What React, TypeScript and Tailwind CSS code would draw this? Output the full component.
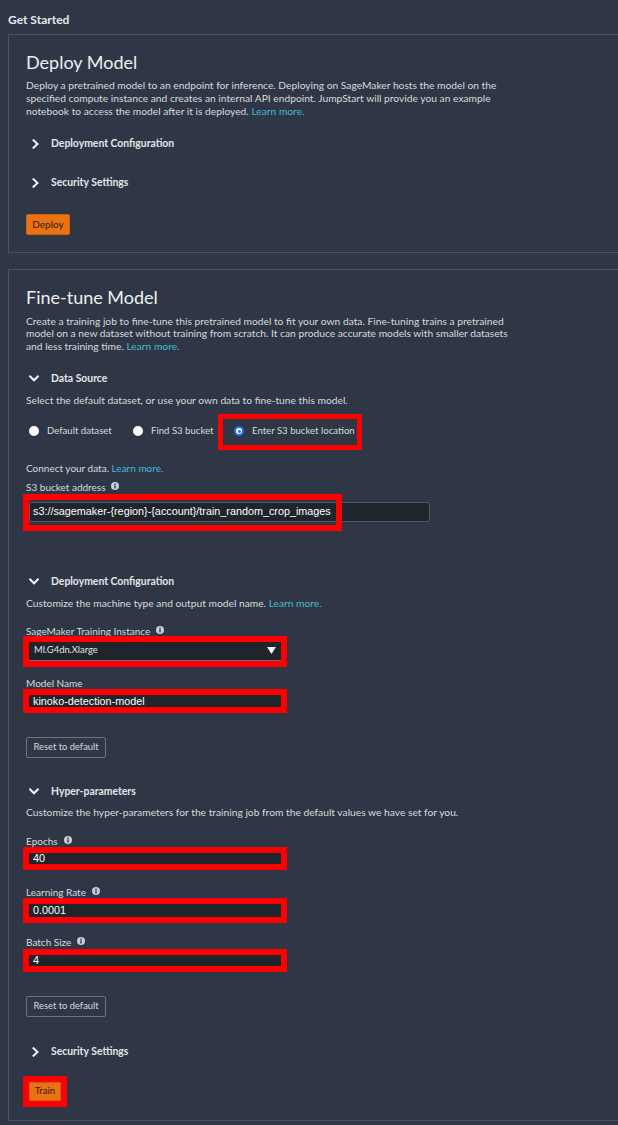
import React from "react";

const F = { fontFamily: "Lato, 'Open Sans', sans-serif" } as React.CSSProperties;
const ARIAL = { fontFamily: "'Liberation Sans', Arial, sans-serif" } as React.CSSProperties;

function ChevronRight() {
  return (
    <svg width="7" height="10" viewBox="0 0 7 10" className="block">
      <path d="M1.5 1.2 L5.5 5 L1.5 8.8" fill="none" stroke="#f2f3f3" strokeWidth="2" strokeLinecap="square" />
    </svg>
  );
}
function ChevronDown() {
  return (
    <svg width="10" height="7" viewBox="0 0 10 7" className="block">
      <path d="M1.2 1.5 L5 5.3 L8.8 1.5" fill="none" stroke="#f2f3f3" strokeWidth="2" strokeLinecap="square" />
    </svg>
  );
}
function Info() {
  return (
    <svg width="8" height="8" viewBox="0 0 8 8" className="block">
      <circle cx="4" cy="4" r="4" fill="#c9ced4" />
      <rect x="3.3" y="3.3" width="1.4" height="3.2" fill="#2f3746" />
      <rect x="3.3" y="1.5" width="1.4" height="1.3" fill="#2f3746" />
    </svg>
  );
}

function Section({ open, title }: { open?: boolean; title: string }) {
  return (
    <div className="relative top-[1px] flex items-center h-[20px]">
      <div className={open ? "w-[25px] pl-[3px]" : "w-[25px] pl-[6px]"}>
        {open ? <ChevronDown /> : <ChevronRight />}
      </div>
      <span className="text-[10.4px] font-bold text-[#e3e6e9]">{title}</span>
    </div>
  );
}

function Label({ children, info }: { children: React.ReactNode; info?: boolean }) {
  return (
    <div className="flex items-center h-[13px] leading-[13px] text-[10px] text-[#d5dbdb]">
      <span>{children}</span>
      {info && <span className="ml-[6px] -mt-[3px]"><Info /></span>}
    </div>
  );
}

function RedInput({ value, h }: { value: string; h: string }) {
  return (
    <div className={`relative z-10 w-[264px] ${h} border-[6px] border-[#ff0000] bg-[#1f242d] flex items-center overflow-visible`}>
      <span className="pl-[4px] text-[10.8px] leading-[12px] text-white whitespace-nowrap" style={ARIAL}>
        {value}
      </span>
    </div>
  );
}

function Radio({ checked }: { checked?: boolean }) {
  if (checked)
    return (
      <span className="w-[10px] h-[10px] rounded-full bg-[#1a73e8] flex items-center justify-center shrink-0">
        <span className="w-[6px] h-[6px] rounded-full bg-white flex items-center justify-center">
          <span className="w-[3px] h-[3px] rounded-full bg-[#1a73e8]" />
        </span>
      </span>
    );
  return <span className="w-[10px] h-[10px] rounded-full bg-white shrink-0" />;
}

export default function App() {
  return (
    <div className="w-[618px] min-h-[1125px] bg-[#2f3746] overflow-hidden pb-[5px]" style={F}>
      <div className="pl-[8px] pt-[12px] h-[34px] text-[12px] leading-[16px] font-bold text-[#e6e9ec]">Get Started</div>

      {/* Deploy card */}
      <div className="ml-[8px] w-[620px] h-[219px] border border-[#4b5362] pl-[17px] pt-[15px]">
        <div className="text-[18px] leading-[24px] text-[#eceef0]">Deploy Model</div>
        <div className="mt-[4.5px] text-[10.25px] leading-[13px] text-[#d5dbdb] whitespace-nowrap">
          <div>Deploy a pretrained model to an endpoint for inference. Deploying on SageMaker hosts the model on the</div>
          <div>specified compute instance and creates an internal API endpoint. JumpStart will provide you an example</div>
          <div>
            notebook to access the model after it is deployed. <span className="text-[#44b9d6]">Learn more.</span>
          </div>
        </div>
        <div className="mt-[6px] h-[39px] flex items-center"><Section title="Deployment Configuration" /></div>
        <div className="h-[39px] flex items-center"><Section title="Security Settings" /></div>
        <button className="mt-[12.5px] w-[44px] h-[21px] rounded-[2px] bg-[#ec7211] border border-[#c9600e] text-[10px] text-[#2a1d10]">
          Deploy
        </button>
      </div>

      {/* Fine-tune card */}
      <div className="ml-[8px] mt-[16px] w-[620px] h-[852px] border border-[#4b5362] pl-[17px] pt-[15px]">
        <div className="text-[18px] leading-[24px] text-[#eceef0]">Fine-tune Model</div>
        <div className="mt-[5.5px] text-[10.25px] leading-[12.5px] text-[#d5dbdb] whitespace-nowrap">
          <div>Create a training job to fine-tune this pretrained model to fit your own data. Fine-tuning trains a pretrained</div>
          <div>model on a new dataset without training from scratch. It can produce accurate models with smaller datasets</div>
          <div>
            and less training time. <span className="text-[#44b9d6]">Learn more.</span>
          </div>
        </div>
        <div className="mt-[15.5px]"><Section open title="Data Source" /></div>
        <div className="mt-[6.5px] text-[10.25px] leading-[13px] text-[#d5dbdb]">
          Select the default dataset, or use your own data to fine-tune this model.
        </div>

        <div className="mt-[14.5px] h-[20px] flex items-center text-[9.6px] text-[#d5dbdb] pl-[3px]">
          <div className="w-[104px] flex items-center gap-[8px]"><Radio /><span>Default dataset</span></div>
          <div className="w-[101px] flex items-center gap-[8px]"><Radio /><span>Find S3 bucket</span></div>
          <div className="relative flex items-center gap-[8px]">
            <Radio checked /><span>Enter S3 bucket location</span>
            <div className="absolute left-[-16px] top-[-10px] w-[144px] h-[36px] border-[5px] border-[#ff0000]" />
          </div>
        </div>

        <div className="mt-[20.5px] text-[10px] leading-[13px] text-[#d5dbdb]">
          Connect your data. <span className="text-[#44b9d6]">Learn more.</span>
        </div>
        <div className="mt-[6px]"><Label info>S3 bucket address</Label></div>
        <div className="relative mt-[7.5px] ml-[3px] w-[401px] h-[20px] bg-[#1f242d] border border-[#525a68] rounded-[2px] flex items-center">
          <span className="pl-[3px] text-[10.8px] text-white whitespace-nowrap" style={ARIAL}>
            s3://sagemaker-{"{region}"}-{"{account}"}/train_random_crop_images
          </span>
          <div className="absolute left-[-7px] top-[-9px] w-[319px] h-[37px] border-[6px] border-[#ff0000]" />
        </div>

        <div className="mt-[49px]"><Section open title="Deployment Configuration" /></div>
        <div className="mt-[6.5px] text-[10.25px] leading-[13px] text-[#d5dbdb]">
          Customize the machine type and output model name. <span className="text-[#44b9d6]">Learn more.</span>
        </div>
        <div className="mt-[15px]"><Label info>SageMaker Training Instance</Label></div>
        <div className="relative z-10 -mt-[2.5px] -ml-[3px] w-[264px] h-[31px] border-[6px] border-[#ff0000] bg-[#ff0000]">
          <div className="h-[19px] bg-[#1f242d] border-b border-[#6b7280] flex items-center justify-between pl-[5px] pr-[5px]">
            <span className="text-[9.4px] text-[#e3e6e9]">Ml.G4dn.Xlarge</span>
            <svg width="9" height="7" viewBox="0 0 9 7"><path d="M0 0 H9 L4.5 7 Z" fill="#f2f3f3" /></svg>
          </div>
        </div>
        <div className="mt-[10.5px]"><Label>Model Name</Label></div>
        <div className="-mt-[1.5px] -ml-[3px]"><RedInput value="kinoko-detection-model" h="h-[24px]" /></div>

        <button className="mt-[24px] w-[80px] h-[21px] rounded-[2px] border border-[#6c7480] text-[9.4px] text-[#d5dbdb]">
          Reset to default
        </button>

        <div className="mt-[23px]"><Section open title="Hyper-parameters" /></div>
        <div className="mt-[5.5px] text-[10.25px] leading-[13px] text-[#d5dbdb]">
          Customize the hyper-parameters for the training job from the default values we have set for you.
        </div>
        <div className="mt-[16px]"><Label info>Epochs</Label></div>
        <div className="-mt-[1.5px] -ml-[3px]"><RedInput value="40" h="h-[23px]" /></div>
        <div className="mt-[16.5px]"><Label info>Learning Rate</Label></div>
        <div className="-mt-[1.5px] -ml-[3px]"><RedInput value="0.0001" h="h-[25px]" /></div>
        <div className="mt-[13.5px]"><Label info>Batch Size</Label></div>
        <div className="-mt-[0.5px] -ml-[3px]"><RedInput value="4" h="h-[23px]" /></div>

        <button className="mt-[24px] w-[80px] h-[21px] rounded-[2px] border border-[#6c7480] text-[9.4px] text-[#d5dbdb]">
          Reset to default
        </button>

        <div className="mt-[24px]"><Section title="Security Settings" /></div>
        <div className="mt-[15px] -ml-[3px] w-[44px] h-[31px] border-[6px] border-[#ff0000] bg-[#ff0000]">
          <div className="w-[32px] h-[19px] bg-[#ec7211] border border-[#c9600e] flex items-center justify-center text-[9.6px] text-[#2a1d10]">
            Train
          </div>
        </div>
      </div>
    </div>
  );
}
